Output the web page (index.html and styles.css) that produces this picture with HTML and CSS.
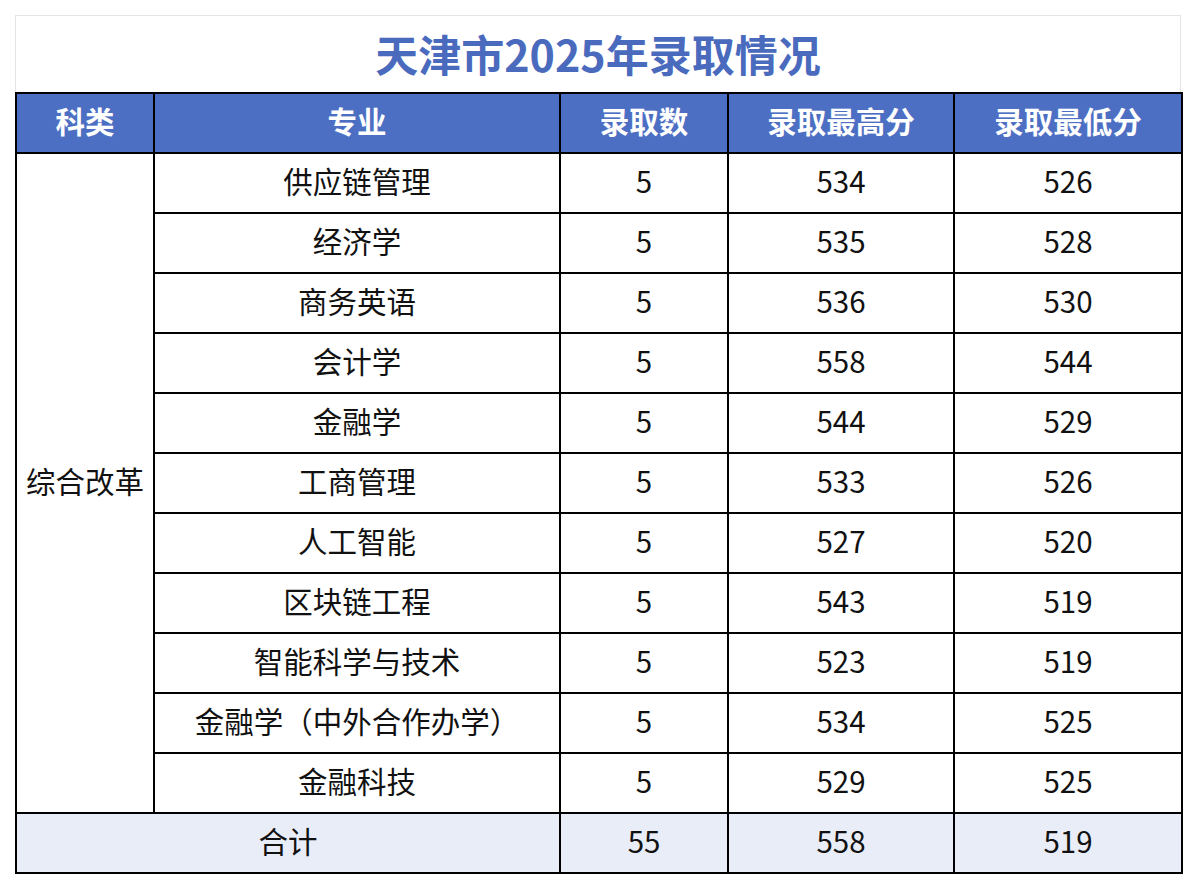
FILE: index.html
```html
<!DOCTYPE html>
<html lang="zh">
<head>
<meta charset="utf-8">
<link rel="stylesheet" href="styles.css">
</head>
<body>
<div class="page">
  <div class="title">天津市2025年录取情况</div>
  <table class="grid">
    <colgroup>
      <col class="c1"><col class="c2"><col class="c3"><col class="c4"><col class="c5">
    </colgroup>
    <thead>
      <tr><th>科类</th><th>专业</th><th>录取数</th><th>录取最高分</th><th>录取最低分</th></tr>
    </thead>
    <tbody>
      <tr><td rowspan="11" class="cat">综合改革</td><td>供应链管理</td><td>5</td><td>534</td><td>526</td></tr>
      <tr><td>经济学</td><td>5</td><td>535</td><td>528</td></tr>
      <tr><td>商务英语</td><td>5</td><td>536</td><td>530</td></tr>
      <tr><td>会计学</td><td>5</td><td>558</td><td>544</td></tr>
      <tr><td>金融学</td><td>5</td><td>544</td><td>529</td></tr>
      <tr><td>工商管理</td><td>5</td><td>533</td><td>526</td></tr>
      <tr><td>人工智能</td><td>5</td><td>527</td><td>520</td></tr>
      <tr><td>区块链工程</td><td>5</td><td>543</td><td>519</td></tr>
      <tr><td>智能科学与技术</td><td>5</td><td>523</td><td>519</td></tr>
      <tr><td>金融学（中外合作办学）</td><td>5</td><td>534</td><td>525</td></tr>
      <tr><td>金融科技</td><td>5</td><td>529</td><td>525</td></tr>
      <tr class="total"><td colspan="2">合计</td><td>55</td><td>558</td><td>519</td></tr>
    </tbody>
  </table>
</div>
</body>
</html>
```
FILE: styles.css
```css
html, body {
  margin: 0;
  padding: 0;
  background: #ffffff;
}
body {
  font-family: "Noto Sans CJK SC", "Noto Sans", sans-serif;
  color: #111111;
}
.page {
  padding: 15px 15px 0 15px;
  width: 1166px;
}
.title {
  box-sizing: border-box;
  height: 77px;
  border: 1px solid #e4e4e4;
  border-bottom: none;
  display: flex;
  align-items: center;
  justify-content: center;
  font-size: 43px;
  font-weight: 700;
  color: #4a6bbd;
  padding-bottom: 3px;
}
.grid {
  width: 1166px;
  border-collapse: collapse;
  table-layout: fixed;
}
.c1 { width: 138px; }
.c2 { width: 406px; }
.c3 { width: 168px; }
.c4 { width: 226px; }
.c5 { width: 228px; }
.grid th,
.grid td {
  box-sizing: border-box;
  border: 2px solid #000000;
  text-align: center;
  vertical-align: middle;
  padding: 0 0 5px 0;
  height: 60px;
  font-size: 29.5px;
  line-height: 1;
}
.grid th {
  background: #4d6fc3;
  color: #ffffff;
  font-weight: 700;
}
.grid td {
  font-weight: 400;
  color: #111111;
}
.total td {
  background: #e9edf8;
}
```
